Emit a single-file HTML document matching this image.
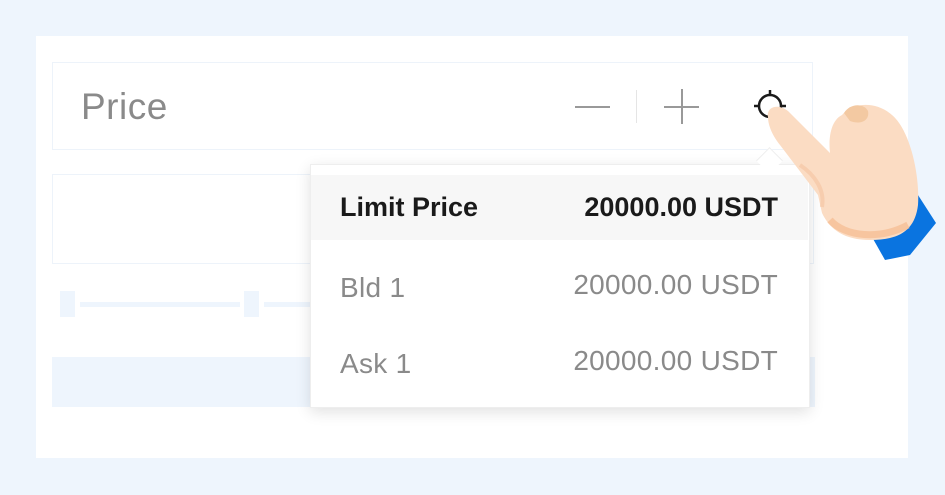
<!DOCTYPE html>
<html><head><style>
body{margin:0;width:945px;height:495px;background:#eef5fd;position:relative;overflow:hidden;font-family:"Liberation Sans",Roboto,sans-serif}
.a{position:absolute}
.r{font-size:28px;letter-spacing:.3px}
</style></head><body>
<div class="a" style="left:36px;top:36px;width:872px;height:422px;background:#fff"></div>
<div class="a" style="left:52px;top:62px;width:759px;height:86px;border:1px solid #edf3fa;background:#fff"></div>
<div class="a" style="left:81px;top:86px;font-size:37px;color:#8a8a8a;letter-spacing:.5px">Price</div>
<div class="a" style="left:575px;top:106px;width:35px;height:2px;background:#999"></div>
<div class="a" style="left:636px;top:90px;width:1px;height:33px;background:#e5e5e5"></div>
<div class="a" style="left:664px;top:106px;width:35px;height:2px;background:#999"></div>
<div class="a" style="left:681px;top:89px;width:2px;height:35px;background:#999"></div>
<svg class="a" style="left:750px;top:88px" width="40" height="36"><circle cx="20" cy="18" r="11" fill="none" stroke="#1a1a1a" stroke-width="2.5"/><path d="M20 2v6M20 28v6M4 18h5M31 18h5" stroke="#1a1a1a" stroke-width="2.5"/></svg>
<div class="a" style="left:52px;top:174px;width:760px;height:88px;border:1px solid #edf3fa"></div>
<div class="a" style="left:60px;top:291px;width:15px;height:26px;background:#eef5fd"></div>
<div class="a" style="left:80px;top:302px;width:160px;height:5px;background:#eef5fd"></div>
<div class="a" style="left:244px;top:291px;width:15px;height:26px;background:#eef5fd"></div>
<div class="a" style="left:264px;top:302px;width:50px;height:5px;background:#eef5fd"></div>
<div class="a" style="left:52px;top:357px;width:763px;height:50px;background:#eef5fd"></div>
<div class="a" style="left:310px;top:164px;width:498px;height:242px;background:#fff;box-shadow:0 4px 14px rgba(0,0,0,.12);border:1px solid #eee"></div>
<div class="a" style="left:760px;top:151px;width:18px;height:18px;background:#fff;transform:rotate(45deg);border-left:1px solid #eee;border-top:1px solid #eee"></div>
<div class="a" style="left:311px;top:175px;width:497px;height:65px;background:#f7f7f7"></div>
<div class="a r" style="left:340px;top:192px;color:#1a1a1a;font-weight:bold;font-size:27px;letter-spacing:0">Limit Price</div>
<div class="a r" style="right:167px;top:192px;color:#1a1a1a;font-weight:bold;font-size:27px;letter-spacing:0">20000.00 USDT</div>
<div class="a r" style="left:340px;top:272px;color:#8a8a8a">Bld 1</div>
<div class="a r" style="right:167px;top:269px;color:#8a8a8a">20000.00 USDT</div>
<div class="a r" style="left:340px;top:348px;color:#8a8a8a">Ask 1</div>
<div class="a r" style="right:167px;top:345px;color:#8a8a8a">20000.00 USDT</div>
<svg class="a" style="left:760px;top:95px" width="185" height="170">
<path d="M112 142 L158 100 L176 128 L150 160 L125 165 Z" fill="#0a74e0"/>
<path d="M8 22 C6 12 18 8 28 16 L70 58 C68 40 72 25 82 20 C92 8 115 5 132 20 C150 35 160 80 158 110 C155 135 140 145 110 145 C85 145 70 135 62 118 L58 100 L20 50 C12 40 8 30 8 22 Z" fill="#fbdcc3"/>
<path d="M84 18 C90 8 104 8 108 16 C110 26 100 30 90 26 Z" fill="#f3c9a2"/>
<path d="M70 125 C85 142 120 145 148 130" stroke="#f5bb90" stroke-width="7" fill="none" opacity=".7"/>
<path d="M40 70 C55 80 65 95 62 112" stroke="#f7cdae" stroke-width="4" fill="none"/>
</svg>
</body></html>
